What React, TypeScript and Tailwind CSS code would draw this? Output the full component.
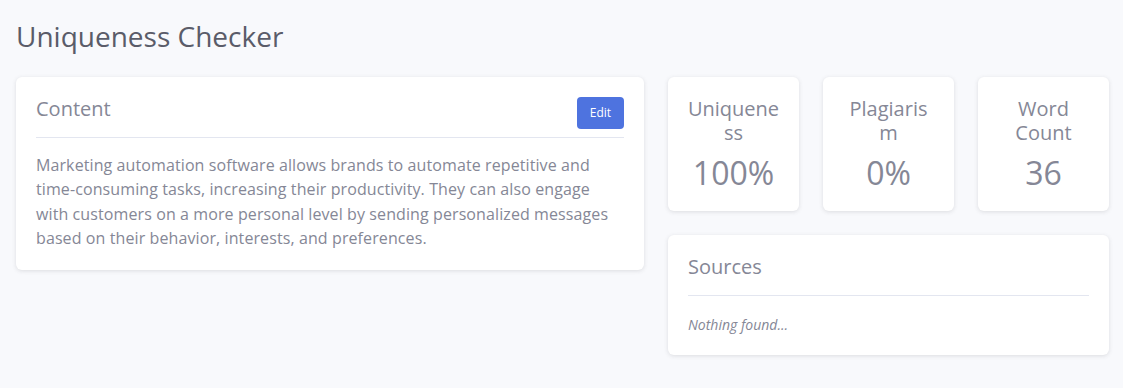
import React from 'react';

const stats = [
  { label: 'Uniqueness', value: '100%' },
  { label: 'Plagiarism', value: '0%' },
  { label: 'Word Count', value: '36' },
];

const App: React.FC = () => {
  return (
    <div
      className="min-h-[388px] bg-[#f8f9fc] pl-4 pr-[14px] pt-4"
      style={{ fontFamily: '"Open Sans", "Liberation Sans", sans-serif' }}
    >
      <h1 className="text-[28px] leading-[40px] text-[#5a5c69] mb-[21px]">Uniqueness Checker</h1>

      <div className="flex gap-6 items-start">
        {/* Content card */}
        <div className="w-[628px] shrink-0 bg-white rounded-md shadow-[0_1px_4px_rgba(58,59,69,0.15)] px-5 pt-5 pb-[19px]">
          <div className="flex justify-between items-start border-b border-[#e3e6f0] pb-2">
            <h2 className="text-[20px] leading-6 text-[#858796]">Content</h2>
            <button className="h-8 w-[47px] rounded bg-[#4e73df] text-white text-[12px]">Edit</button>
          </div>
          <p className="text-[16px] leading-[24.4px] tracking-[0.1px] text-[#858796] mt-[15px]">
            Marketing automation software allows brands to automate repetitive and time-consuming tasks, increasing their productivity. They can also engage with customers on a more personal level by sending personalized messages based on their behavior, interests, and preferences.
          </p>
        </div>

        {/* Right column */}
        <div className="w-[441px] shrink-0 flex flex-col gap-6">
          <div className="grid grid-cols-3 gap-6">
            {stats.map(s => (
              <div
                key={s.label}
                className="bg-white rounded-md shadow-[0_1px_4px_rgba(58,59,69,0.15)] px-[18px] pt-5 pb-[18px] text-center"
              >
                <div className="text-[20px] leading-6 text-[#858796] break-words">{s.label}</div>
                <div className="text-[32px] leading-10 text-[#858796] mt-2">{s.value}</div>
              </div>
            ))}
          </div>

          <div className="bg-white rounded-md shadow-[0_1px_4px_rgba(58,59,69,0.15)] px-5 pt-5 pb-5">
            <h2 className="text-[20px] leading-6 text-[#858796] pb-4 border-b border-[#e3e6f0]">Sources</h2>
            <p className="text-[14px] leading-5 italic text-[#858796] mt-[19px]">Nothing found...</p>
          </div>
        </div>
      </div>
    </div>
  );
};

export default App;
